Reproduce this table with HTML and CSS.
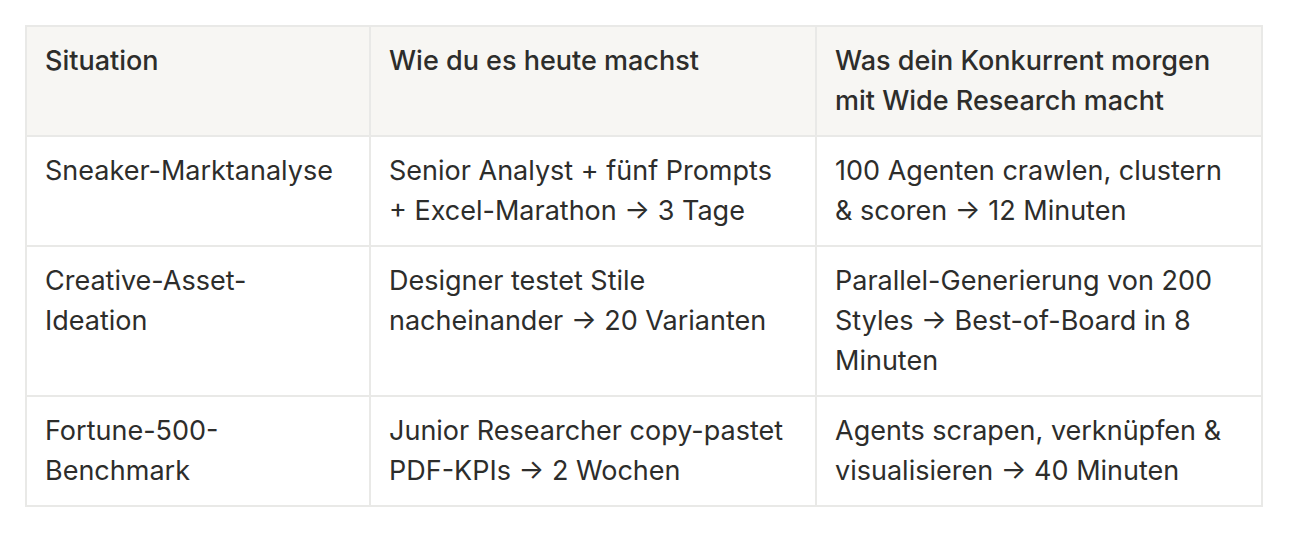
FILE: index.html
```html
<!DOCTYPE html>
<html lang="de">
<head>
<meta charset="utf-8">
<link rel="stylesheet" href="styles.css">
</head>
<body>
<div class="wrap">
<table class="cmp">
  <colgroup><col class="c1"><col class="c2"><col class="c3"></colgroup>
  <thead>
    <tr><th>Situation</th><th>Wie du es heute machst</th><th>Was dein Konkurrent morgen mit Wide Research macht</th></tr>
  </thead>
  <tbody>
    <tr><td>Sneaker-Marktanalyse</td><td>Senior Analyst + fünf Prompts + Excel-Marathon → 3 Tage</td><td>100 Agenten crawlen, clustern &amp; scoren → 12 Minuten</td></tr>
    <tr><td>Creative-Asset-Ideation</td><td>Designer testet Stile nacheinander → 20 Varianten</td><td>Parallel-Generierung von 200 Styles → Best-of-Board in 8 Minuten</td></tr>
    <tr><td>Fortune-500-Benchmark</td><td>Junior Researcher copy-pastet PDF-KPIs → 2 Wochen</td><td>Agents scrapen, verknüpfen &amp; visualisieren → 40 Minuten</td></tr>
  </tbody>
</table>
</div>
</body>
</html>
```
FILE: styles.css
```css
html, body { margin: 0; padding: 0; background: #ffffff; }
body { font-family: Inter, "Noto Sans", sans-serif; color: #2d2d2b; }
.wrap { padding: 25px 0 0 25px; }
.cmp { border-collapse: collapse; table-layout: fixed; width: 1236px; }
.c1 { width: 344px; }
.c2 { width: 446px; }
.c3 { width: 446px; }
.cmp th, .cmp td {
  border: 2px solid #e9e9e7;
  padding: 14px 22px 14px 18px;
  font-size: 27px;
  line-height: 40px;
  text-align: left;
  vertical-align: top;
  font-weight: 400;
}
.cmp th { background: #f7f6f3; font-weight: 500; }
```
